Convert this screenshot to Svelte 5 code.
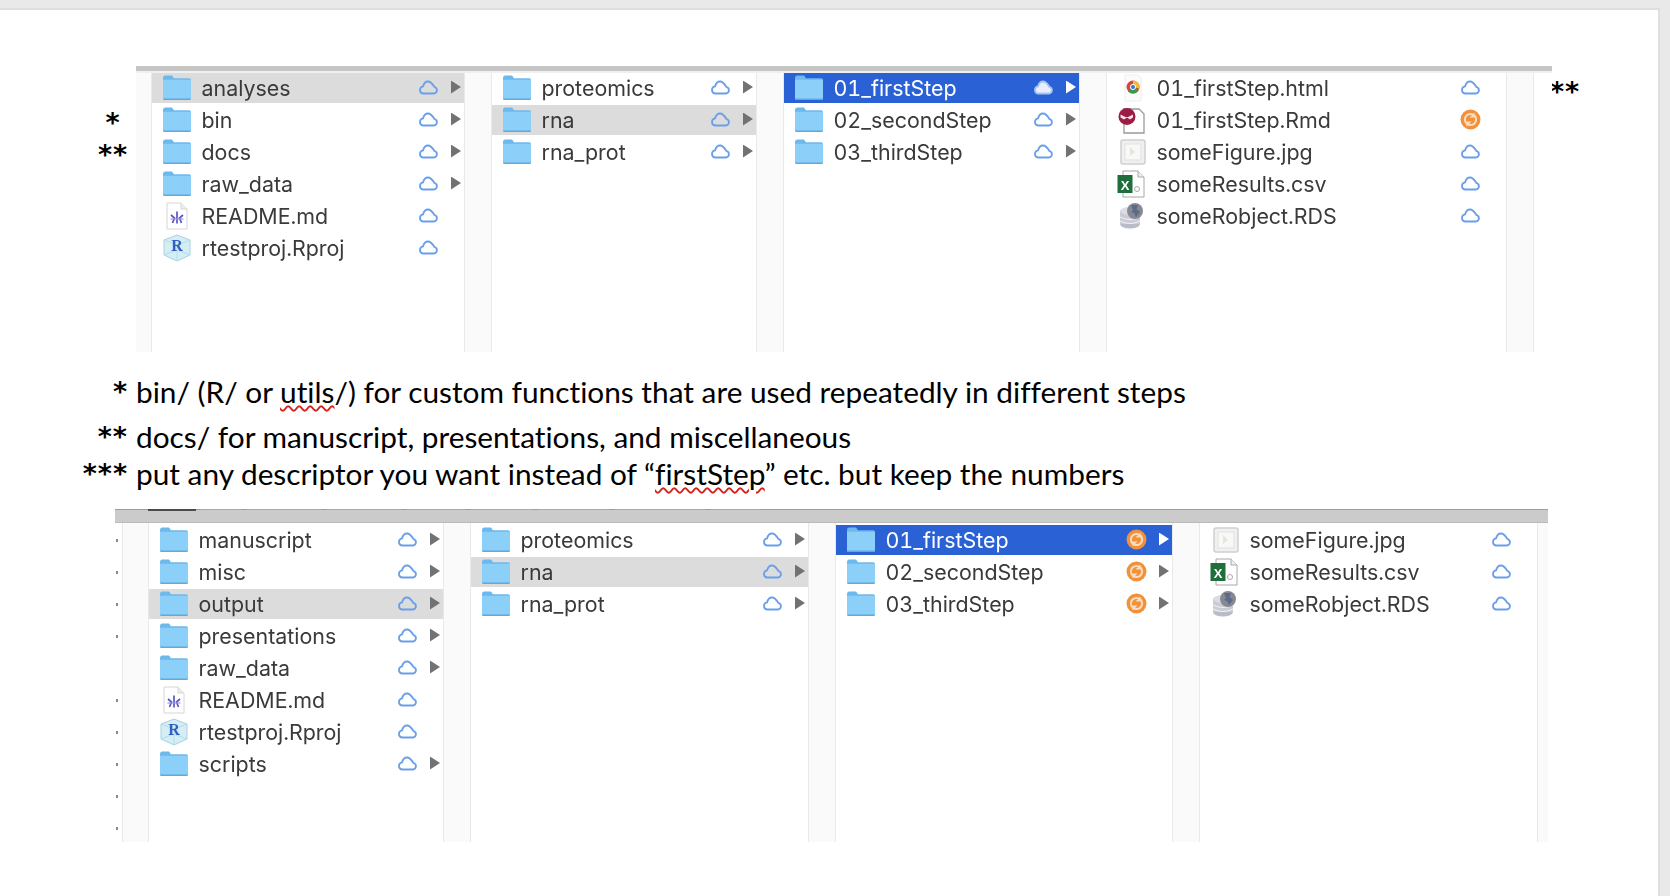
<script>
  const topCols = [
    { w: 314, rows: [
      { n: 'analyses', i: 'folder', s: 'cloud', a: 1, hl: 'grey' },
      { n: 'bin', i: 'folder', s: 'cloud', a: 1 },
      { n: 'docs', i: 'folder', s: 'cloud', a: 1 },
      { n: 'raw_data', i: 'folder', s: 'cloud', a: 1 },
      { n: 'README.md', i: 'md', s: 'cloud' },
      { n: 'rtestproj.Rproj', i: 'rproj', s: 'cloud' }
    ]},
    { w: 266, rows: [
      { n: 'proteomics', i: 'folder', s: 'cloud', a: 1 },
      { n: 'rna', i: 'folder', s: 'cloud', a: 1, hl: 'grey' },
      { n: 'rna_prot', i: 'folder', s: 'cloud', a: 1 }
    ]},
    { w: 297, rows: [
      { n: '01_firstStep', i: 'folder', s: 'cloud', a: 1, hl: 'blue' },
      { n: '02_secondStep', i: 'folder', s: 'cloud', a: 1 },
      { n: '03_thirdStep', i: 'folder', s: 'cloud', a: 1 }
    ]},
    { w: 401, rows: [
      { n: '01_firstStep.html', i: 'html', s: 'cloud' },
      { n: '01_firstStep.Rmd', i: 'rmd', s: 'sync' },
      { n: 'someFigure.jpg', i: 'jpg', s: 'cloud' },
      { n: 'someResults.csv', i: 'xls', s: 'cloud' },
      { n: 'someRobject.RDS', i: 'rds', s: 'cloud' }
    ]}
  ];
  const bottomCols = [
    { w: 296, rows: [
      { n: 'manuscript', i: 'folder', s: 'cloud', a: 1 },
      { n: 'misc', i: 'folder', s: 'cloud', a: 1 },
      { n: 'output', i: 'folder', s: 'cloud', a: 1, hl: 'grey' },
      { n: 'presentations', i: 'folder', s: 'cloud', a: 1 },
      { n: 'raw_data', i: 'folder', s: 'cloud', a: 1 },
      { n: 'README.md', i: 'md', s: 'cloud' },
      { n: 'rtestproj.Rproj', i: 'rproj', s: 'cloud' },
      { n: 'scripts', i: 'folder', s: 'cloud', a: 1 }
    ]},
    { w: 339, rows: [
      { n: 'proteomics', i: 'folder', s: 'cloud', a: 1 },
      { n: 'rna', i: 'folder', s: 'cloud', a: 1, hl: 'grey' },
      { n: 'rna_prot', i: 'folder', s: 'cloud', a: 1 }
    ]},
    { w: 338, rows: [
      { n: '01_firstStep', i: 'folder', s: 'sync', a: 1, hl: 'blue' },
      { n: '02_secondStep', i: 'folder', s: 'sync', a: 1 },
      { n: '03_thirdStep', i: 'folder', s: 'sync', a: 1 }
    ]},
    { w: 339, rows: [
      { n: 'someFigure.jpg', i: 'jpg', s: 'cloud' },
      { n: 'someResults.csv', i: 'xls', s: 'cloud' },
      { n: 'someRobject.RDS', i: 'rds', s: 'cloud' }
    ]}
  ];
  const dots = [1, 1, 1, 1, 0, 1, 1, 1, 1, 1];
  const tabs = [
    { w: 48, dark: true }, { w: 40 }, { w: 76 }, { w: 74 }, { w: 60 }, { w: 62 }, { w: 72 }, { w: 90 }, { w: 50 }
  ];
</script>

{#snippet icon(kind)}
  <svg class="ic" viewBox="0 0 30 28" aria-hidden="true">
    {#if kind === 'folder'}
      <path d="M1 4C1 2.500 2 1.500 3.200 1.500h6c1 0 1.500.6 2 1.500l.6 1.200H27c1.200 0 2 .8 2 2V24c0 1.300-1 2-2 2H3c-1.200 0-2-.7-2-2z" fill="#6db8ec"/>
      <path d="M1 5.800h28v18.400c0 1-.8 1.500-2 1.500H3c-1.200 0-2-.5-2-1.500z" fill="#8ccff8"/>
      <path d="M1 24.600h28c0 .9-.8 1.500-2 1.500H3c-1.200 0-2-.6-2-1.500z" fill="#5ea9de"/>
    {:else if kind === 'md'}
      <path d="M5 1h14l6 6v20H5z" fill="#fff" stroke="#d6d6d6"/>
      <path d="M19 1v6h6" fill="#eee" stroke="#d6d6d6"/>
      <path d="M9 13l3.500 3-2 5M15 9.500v12M21 13l-3.500 3 2 5" fill="none" stroke="#5a55c8" stroke-width="1.700"/>
      <path d="M8.500 17h13" stroke="#9a97e0" stroke-width="1.200"/>
    {:else if kind === 'rproj'}
      <path d="M15 1l13 5v15l-13 6L2 21V6z" fill="#d5edf5" stroke="#a5d3e2"/>
      <path d="M2 6l13 5 13-5M15 11v16M2 21l13-5 13 5" fill="none" stroke="#b7dde9"/>
      <text x="15" y="17" class="glyph r">R</text>
    {:else if kind === 'html'}
      <path d="M8 1h13l3 3v23H8z" fill="#fbfbfb" stroke="#eee"/>
      <circle cx="16" cy="13" r="6.500" fill="#d9473c"/>
      <path d="M16 13l5.800 3a6.500 6.500 0 0 1-11 1z" fill="#3a9a4a"/>
      <path d="M16 6.500a6.500 6.500 0 0 1 6.300 8L16 13z" fill="#f0c230"/>
      <circle cx="16" cy="13" r="2.600" fill="#3f78d8" stroke="#fff"/>
    {:else if kind === 'rmd'}
      <path d="M7 3h15l5 5v19H7z" fill="#fff" stroke="#9a9a9a" stroke-width="1.300"/>
      <circle cx="10" cy="10.500" r="8.500" fill="#9b1c45"/>
      <path d="M3.500 8.500l5 2.500h2.500l5-2.500v3l-3 2-3-2-3 2-3.500-2z" fill="#f4dfe5"/>
    {:else if kind === 'jpg'}
      <rect x="4" y="2" width="24" height="24" rx="2" fill="#f0f0f0" stroke="#cfcfcf" stroke-width="1.500"/>
      <rect x="8" y="6" width="16" height="16" fill="#f8f9f6" stroke="#e1e1e1"/>
      <path d="M13 9v9l5-4z" fill="#dfe8dc"/>
    {:else if kind === 'xls'}
      <path d="M6 1h15l6 6v20H6z" fill="#fff" stroke="#a8a8a8"/>
      <path d="M21 1v6h6" fill="#efefef" stroke="#a8a8a8"/>
      <rect x="0.500" y="5" width="15" height="18" fill="#1f6e3c"/>
      <text x="8" y="19.500" class="glyph x">X</text>
      <circle cx="20" cy="19" r="2.500" fill="none" stroke="#aaa"/>
    {:else if kind === 'rds'}
      <ellipse cx="13" cy="22" rx="10" ry="4.500" fill="#b9bcc8"/>
      <rect x="3" y="9" width="20" height="13" fill="#c9cbd5"/>
      <ellipse cx="13" cy="9" rx="10" ry="4" fill="#dcdde4"/>
      <path d="M3 15q10 5 20 0M3 19q10 5 20 0" fill="none" stroke="#f2f2f5"/>
      <circle cx="18" cy="9" r="8" fill="#868992"/>
      <path d="M14 3h7l-1.500 4 3.500 3-4 5-2-4-3-1 2-2z" fill="#5b6b8c"/>
    {/if}
  </svg>
{/snippet}

{#snippet finder(cols)}
  <div class="cols">
    {#each cols as col}
      <ul class="col" style="width:{col.w}px">
        {#each col.rows as r}
          <li class="row {r.hl ?? ''}">
            {@render icon(r.i)}
            <span class="name">{r.n}</span>
            {#if r.s === 'cloud'}
              <svg class="status" viewBox="0 0 21 15" aria-hidden="true">
                <path d="M5 13.500h10.800a3.300 3.300 0 0 0 .6-6.500C15.200 5 13.200 1.500 10 1.500 7.200 1.500 5.700 3.700 5 6.400A3.600 3.600 0 0 0 5 13.500z"
                  fill={r.hl === 'blue' ? '#e8eefb' : 'none'}
                  stroke={r.hl === 'blue' ? '#a9c4f2' : '#6a9fe8'} stroke-width="1.800"/>
              </svg>
            {:else}
              <svg class="status sync" viewBox="0 0 21 21" aria-hidden="true">
                <circle cx="10.500" cy="10.500" r="10" fill="#f1923a"/>
                <circle cx="10.500" cy="10.500" r="5.600" fill="none" stroke="#fbdcc0" stroke-width="2"/>
                <path d="M14.500 3.500v5h-5zM6.500 17.500v-5h5z" fill="#fbdcc0"/>
              </svg>
            {/if}
            {#if r.a}<span class="arrow"></span>{:else}<span class="noarrow"></span>{/if}
          </li>
        {/each}
      </ul>
    {/each}
  </div>
{/snippet}

<div class="page">
  <section class="top">
    <div class="marks left">
      <span></span>
      <span>*</span>
      <span>**</span>
    </div>
    <div class="finder one">
      <div class="bar"></div>
      {@render finder(topCols)}
    </div>
    <div class="marks right"><span>**</span></div>
  </section>

  <section class="notes">
    <div class="note first"><span class="st">*</span><span>bin/ (R/ or <u>utils</u>/) for custom functions that are used repeatedly in different steps</span></div>
    <div class="note"><span class="st">**</span><span>docs/ for manuscript, presentations, and miscellaneous</span></div>
    <div class="note"><span class="st">***</span><span>put any descriptor you want instead of “<u>firstStep</u>” etc. but keep the numbers</span></div>
  </section>

  <section class="finder two">
    <div class="bar thick">
      {#each tabs as t}<i class:dark={t.dark} style="width:{t.w}px"></i>{/each}
    </div>
    <div class="body">
      <div class="dots">
        {#each dots as d}<b class:on={d}></b>{/each}
      </div>
      {@render finder(bottomCols)}
    </div>
  </section>
</div>

<style>
  :global(body) { margin: 0; background: #e9e9e9; overflow: hidden; }
  .page {
    box-sizing: border-box;
    margin-top: 8px;
    width: 1660px;
    height: 888px;
    background: #fff;
    border-top: 2px solid #dedede;
    border-right: 2px solid #dedede;
    overflow: hidden;
  }
  .top { display: flex; margin-top: 56px; align-items: flex-start; }
  .marks { flex: none; display: flex; flex-direction: column; font: 700 27px/32px "DejaVu Sans", sans-serif; letter-spacing: 1px; color: #000; }
  .marks span { height: 32px; display: block; white-space: nowrap; }
  .marks.left { width: 136px; padding-top: 9px; text-align: center; box-sizing: border-box; padding-left: 98px; padding-right: 8px; }
  .marks.right { padding-top: 10px; margin-left: -2px; }

  .finder { flex: none; background: #fafafa; filter: blur(0.4px); overflow: hidden; box-sizing: border-box; }
  .one { width: 1416px; height: 286px; }
  .one .cols { padding-left: 15px; }
  .one .cols::after { content: ""; flex: 1; background: #fff; border-left: 1.500px solid #e9e9e9; }
  .two { width: 1433px; height: 333px; margin-left: 115px; margin-top: 17px; }
  .bar { height: 5px; background: #c6c6c6; border-bottom: 2px solid #f0f0f0; }
  .bar.thick { height: 12px; border-top: 1px solid #9d9d9d; display: flex; gap: 5px; padding-left: 33px; background: #cbcbcb; border-bottom: 1px solid #bbb; }
  .bar.thick i { height: 1px; background: #a9a9a9; margin-top: -1px; display: block; }
  .bar.thick i.dark { background: #4a4a4a; height: 2px; }
  .body { display: flex; }
  .dots { width: 33px; display: flex; flex-direction: column; padding-top: 2px; box-sizing: border-box; flex: none; position: relative; background: linear-gradient(to right, #fff 0, #fff 7px, #e9e9e9 7px, #e9e9e9 8.500px, #fafafa 8.500px); }
  .dots b { display: block; height: 32px; position: relative; }
  .dots b.on::before { content: ""; display: block; width: 2px; height: 3px; background: #8a8a8a; position: absolute; left: 0.500px; top: 14px; }

  .cols { display: flex; gap: 26px; flex: 1; }
  .one .cols { min-height: 279px; }
  .two .cols { min-height: 319px; }
  .col {
    list-style: none; margin: 0; padding: 0; box-sizing: border-box; background: #fff;
    border-left: 1.500px solid #e9e9e9; border-right: 1.500px solid #e9e9e9; flex: none;
  }
  .two .col { padding-top: 2px; }
  .row { height: 30px; margin-bottom: 2px; box-sizing: border-box; display: flex; align-items: center; padding: 0 3px 0 10px; color: #3a3a3a; font: 400 21.400px/30px Inter, "Liberation Sans", sans-serif; font-variant-numeric: tabular-nums; }
  .row.grey { background: #dcdcdc; }
  .row.blue { background: #2a62d6; color: #fff; }
  .ic { width: 30px; height: 28px; flex: none; margin-right: 9.500px; }
  .name { flex: 1; white-space: nowrap; }
  .status { width: 21px; height: 15px; flex: none; margin-right: 12px; margin-bottom: 2px; }
  .status.sync { height: 21px; }
  .arrow, .noarrow { width: 10px; height: 13px; flex: none; margin-bottom: 2px; }
  .arrow { clip-path: polygon(0 0, 100% 50%, 0 100%); background: #727272; }
  .row.blue .arrow { background: #fff; }
  .glyph { font-family: "Liberation Serif", serif; font-weight: 700; text-anchor: middle; }
  .glyph.r { font-size: 16px; fill: #2f5fc4; }
  .glyph.x { font-family: "Liberation Sans", sans-serif; font-size: 13px; fill: #fff; }

  .notes { margin-top: 21px; font: 400 29.800px/37px Lato, "Open Sans", sans-serif; font-variant-ligatures: none; color: #000; }
  .note { display: flex; height: 37px; white-space: nowrap; }
  .note.first { margin-bottom: 8px; }
  .st { width: 128px; text-align: right; margin-right: 8px; flex: none; font: 700 27px/37px "DejaVu Sans", sans-serif; letter-spacing: 1px; }
  u { text-decoration: underline wavy #d8201c 1.600px; text-underline-offset: 2px; }
</style>
